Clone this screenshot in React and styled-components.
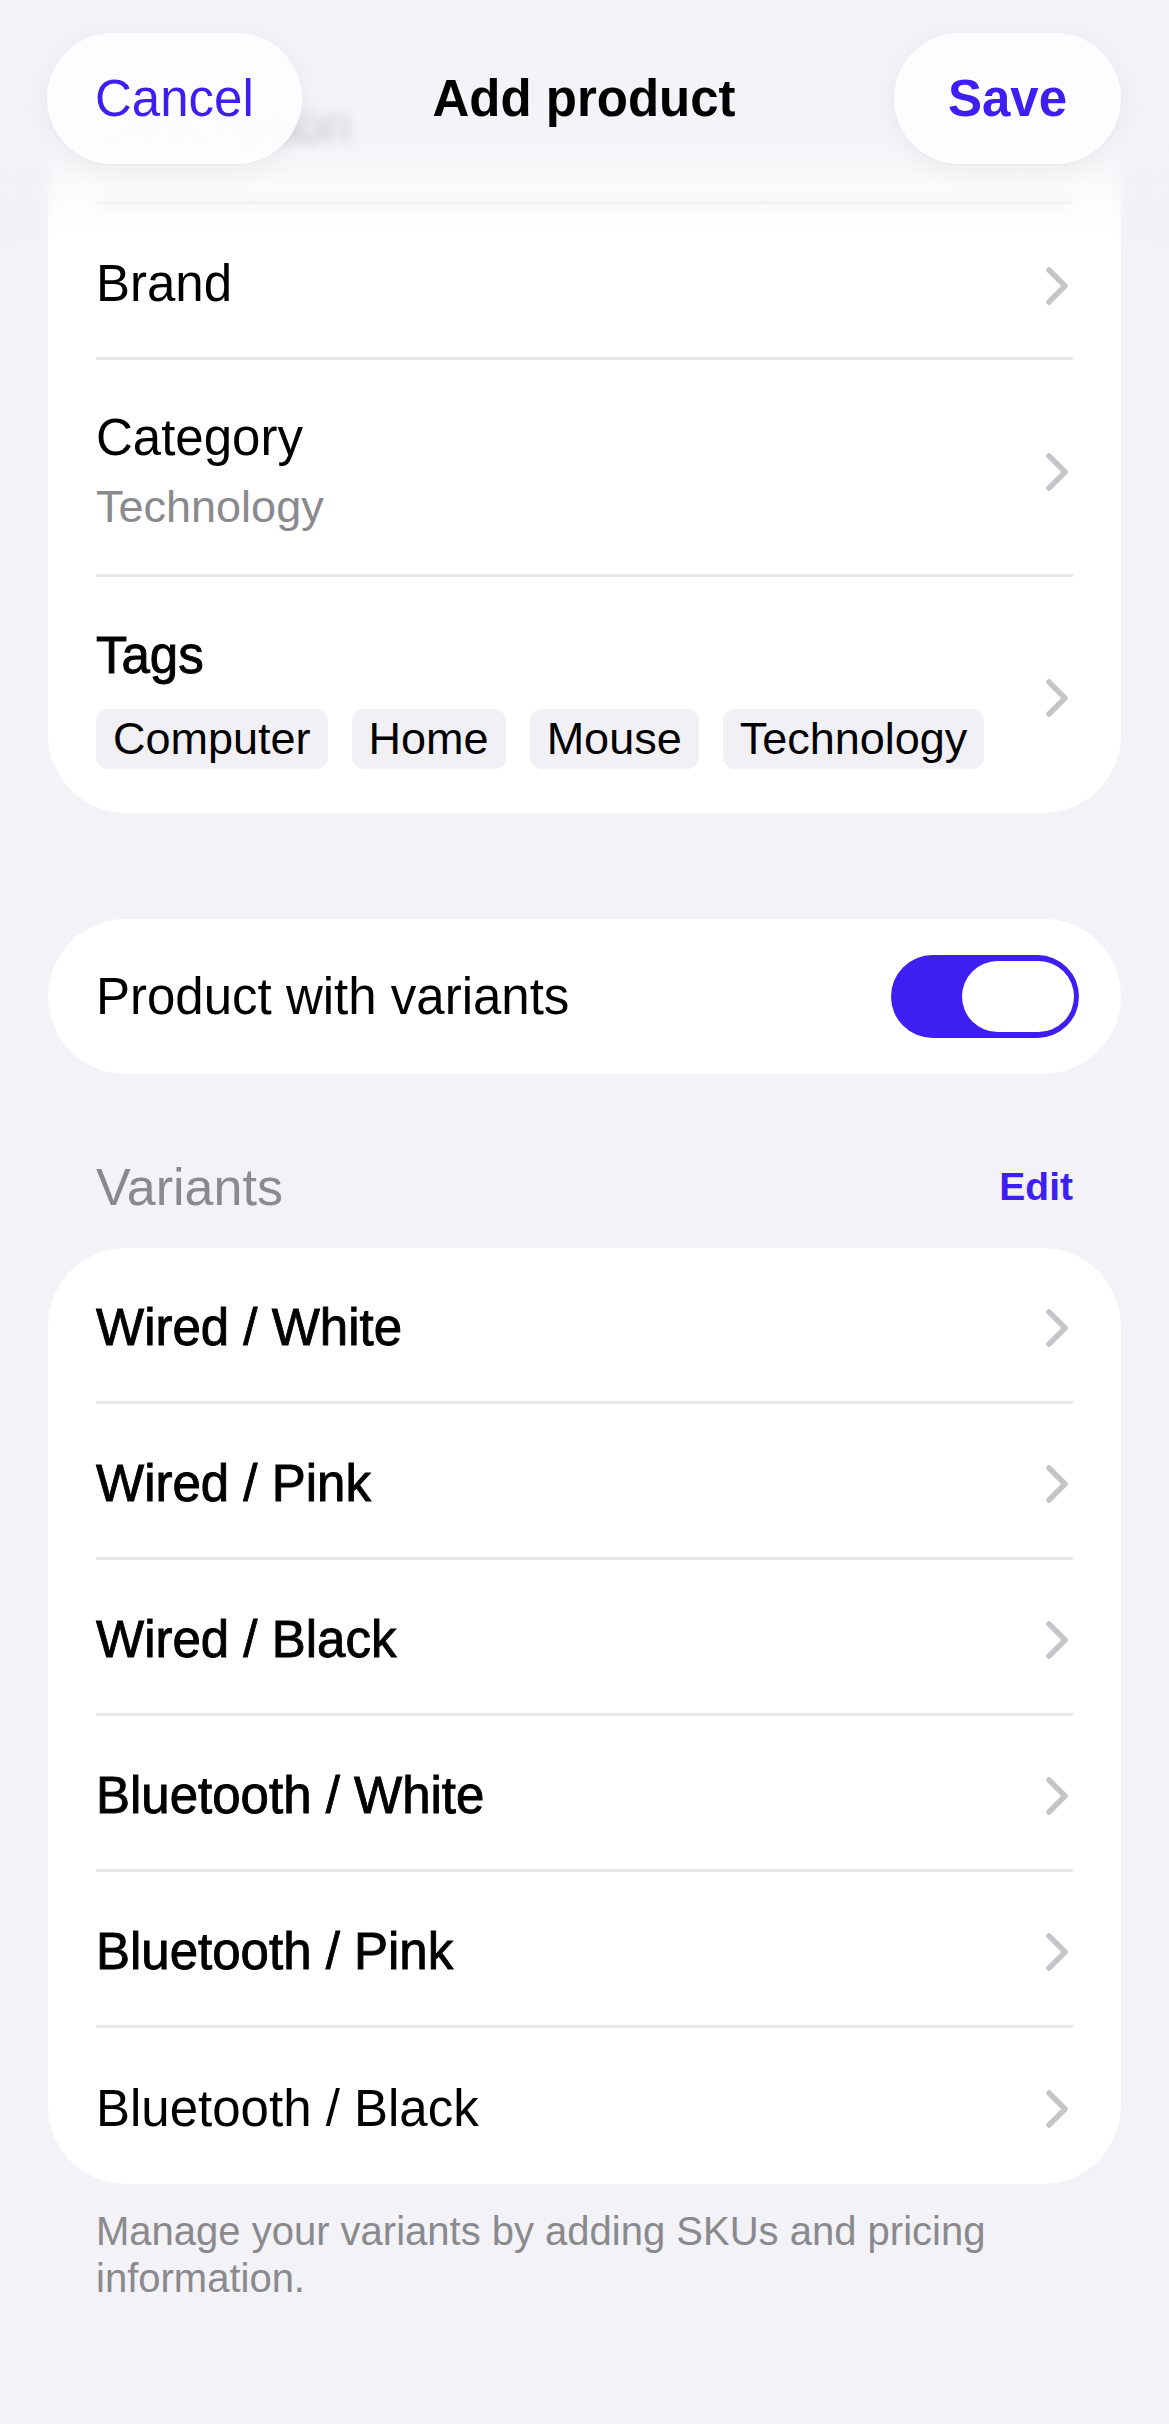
import React from 'react'
import styled, { createGlobalStyle } from 'styled-components'

const accent = '#3e1ff2'
const muted = '#8a8a8e'

const Global = createGlobalStyle`
  * { box-sizing: border-box; }
  html, body {
    margin: 0;
    background: #f2f2f7;
    font-family: "Liberation Sans", Arial, sans-serif;
    -webkit-font-smoothing: antialiased;
  }
`

const Page = styled.div`
  min-height: 100vh;
  padding: 0 48px 140px;
`

const Header = styled.header`
  position: fixed;
  top: 0;
  left: 0;
  right: 0;
  height: 260px;
  z-index: 10;

  &::before {
    content: '';
    position: absolute;
    inset: 0;
    background: linear-gradient(
      to bottom,
      rgba(242, 242, 247, 0.98) 0px,
      rgba(242, 242, 247, 0.9) 100px,
      rgba(242, 242, 247, 0.78) 140px,
      rgba(242, 242, 247, 0.42) 190px,
      rgba(242, 242, 247, 0) 255px
    );
    backdrop-filter: blur(6px);
    -webkit-mask-image: linear-gradient(to bottom, #000 0px, #000 170px, transparent 250px);
    mask-image: linear-gradient(to bottom, #000 0px, #000 170px, transparent 250px);
  }
`

const NavBar = styled.div`
  position: relative;
  display: grid;
  grid-template-columns: 1fr auto 1fr;
  align-items: center;
  padding: 33px 48px 0 47px;
`

const NavButton = styled.button`
  justify-self: ${({ $end }) => ($end ? 'end' : 'start')};
  height: 131px;
  padding: 0 ${({ $pad }) => $pad}px;
  border: none;
  border-radius: 66px;
  background: rgba(253, 253, 255, 0.96);
  box-shadow: 0 6px 26px rgba(0, 0, 0, 0.05), 0 1px 3px rgba(0, 0, 0, 0.03);
  font-family: inherit;
  font-size: 51px;
  font-weight: ${({ $bold }) => ($bold ? 700 : 400)};
  color: ${accent};
`

const Title = styled.h1`
  margin: 0;
  font-size: 51px;
  font-weight: 700;
  color: #000;
`

const Card = styled.section`
  background: #fff;
  border-radius: 78px;
  margin-top: ${({ $top }) => $top || 0}px;
`

const Row = styled.div`
  display: flex;
  align-items: center;
  justify-content: space-between;
  margin: 0 ${({ $right }) => $right || 48}px 0 48px;
  min-height: ${({ $h }) => $h}px;
  padding: ${({ $pad }) => $pad || '6px 0 0'};
  border-bottom: 3px solid #e8e8ea;

  &:last-child {
    border-bottom: none;
  }
`

const Stack = styled.div`
  display: flex;
  flex-direction: column;
`

const Label = styled.span`
  font-size: 51px;
  line-height: ${({ $lh }) => $lh || 60}px;
  color: #000;
  -webkit-text-stroke: ${({ $medium }) => ($medium ? '0.9px #000' : '0')};
`

const Sub = styled.span`
  font-size: 45px;
  line-height: 68px;
  color: ${muted};
`

const Chips = styled.div`
  display: flex;
  gap: 24px;
  margin-top: 23px;
`

const Chip = styled.span`
  height: 60px;
  padding: 0 17px;
  border-radius: 12px;
  background: #f1f1f5;
  font-size: 45px;
  line-height: 60px;
  color: #000;
`

const ChevronIcon = styled.svg`
  flex: none;
  margin: ${({ $shift }) => $shift || 0}px 4px 0 0;
`

const Chevron = ({ shift }) => (
  <ChevronIcon $shift={shift} width="24" height="40" viewBox="0 0 24 40">
    <path d="M4 4 L20 20 L4 36" fill="none" stroke="#c5c5c8" strokeWidth="5.5" strokeLinecap="round" strokeLinejoin="round" />
  </ChevronIcon>
)

const Track = styled.div`
  display: flex;
  align-items: center;
  justify-content: flex-end;
  width: 188px;
  height: 83px;
  padding: 0 5px;
  border-radius: 42px;
  background: ${accent};
`

const Knob = styled.div`
  width: 112px;
  height: 71px;
  border-radius: 36px;
  background: #fff;
`

const SectionHeader = styled.div`
  display: flex;
  align-items: center;
  justify-content: space-between;
  padding: 0 48px;
  margin: 83px 0 31px;
`

const SectionTitle = styled.span`
  font-size: 52px;
  line-height: 60px;
  color: ${muted};
`

const EditLink = styled.span`
  font-size: 39px;
  line-height: 48px;
  font-weight: 700;
  color: ${accent};
`

const Footnote = styled.p`
  margin: 24px 0 0;
  padding: 0 48px;
  font-size: 40px;
  line-height: 47px;
  color: ${muted};
`

const tags = ['Computer', 'Home', 'Mouse', 'Technology']

const variants = [
  { name: 'Wired / White', medium: true },
  { name: 'Wired / Pink', medium: true },
  { name: 'Wired / Black', medium: true },
  { name: 'Bluetooth / White', medium: true },
  { name: 'Bluetooth / Pink', medium: true },
  { name: 'Bluetooth / Black', medium: false },
]

export default function App() {
  return (
    <>
      <Global />
      <Header>
        <NavBar>
          <NavButton $pad={48}>Cancel</NavButton>
          <Title>Add product</Title>
          <NavButton $end $bold $pad={54}>Save</NavButton>
        </NavBar>
      </Header>

      <Page>
        <Card>
          <Row $h={204} $pad="95px 0 46px">
            <Label>Description</Label>
          </Row>
          <Row $h={156}>
            <Label>Brand</Label>
            <Chevron shift={4} />
          </Row>
          <Row $h={217} $pad="43px 0 33px">
            <Stack>
              <Label $lh={70}>Category</Label>
              <Sub>Technology</Sub>
            </Stack>
            <Chevron />
          </Row>
          <Row $h={236} $pad="49px 0 44px">
            <Stack>
              <Label $medium>Tags</Label>
              <Chips>
                {tags.map((t) => (
                  <Chip key={t}>{t}</Chip>
                ))}
              </Chips>
            </Stack>
            <Chevron />
          </Row>
        </Card>

        <Card $top={106}>
          <Row $h={155} $right={42} $pad="0">
            <Label>Product with variants</Label>
            <Track>
              <Knob />
            </Track>
          </Row>
        </Card>

        <SectionHeader>
          <SectionTitle>Variants</SectionTitle>
          <EditLink>Edit</EditLink>
        </SectionHeader>

        <Card>
          {variants.map((v) => (
            <Row key={v.name} $h={156}>
              <Label $medium={v.medium}>{v.name}</Label>
              <Chevron />
            </Row>
          ))}
        </Card>

        <Footnote>Manage your variants by adding SKUs and pricing information.</Footnote>
      </Page>
    </>
  )
}
